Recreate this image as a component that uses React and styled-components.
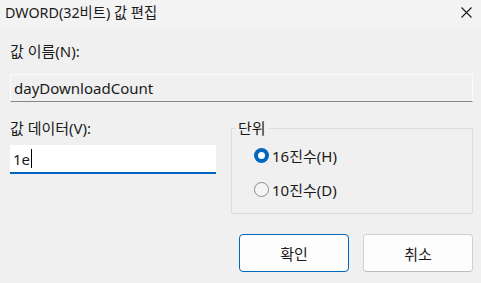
import React from "react";
import styled, { createGlobalStyle } from "styled-components";

const Global = createGlobalStyle`
  html, body { margin: 0; padding: 0; background: #f0f0f0; }
  * { box-sizing: border-box; }
`;

const FONT = `"Noto Sans", "Noto Sans CJK KR", sans-serif`;

const Window = styled.div`
  width: 481px;
  height: 283px;
  background: #f0f0f0;
  font-family: ${FONT};
  color: #1a1a1a;
  display: flex;
  flex-direction: column;
  overflow: hidden;
`;

const TitleBar = styled.div`
  height: 29px;
  background: #f3f3f3;
  display: flex;
  align-items: center;
  justify-content: space-between;
  padding: 0 8px 0 5px;
  font-size: 14.3px;
`;

const Title = styled.span`
  line-height: 1;
  margin-top: -3px;
`;

const Close = styled.svg`
  width: 11px;
  height: 11px;
  margin-right: 1px;
  margin-top: -4px;
`;

const Body = styled.div`
  padding: 14px 8px 0 10px;
  display: flex;
  flex-direction: column;
`;

const Label = styled.div`
  font-size: 15px;
  line-height: 16px;
  height: 16px;
`;

const NameField = styled.div`
  margin-top: 15px;
  height: 28px;
  background: #f0f0f0;
  border: 1px solid #fbfbfb;
  border-bottom: 1px solid #868686;
  display: flex;
  align-items: center;
  padding-left: 3px;
  font-size: 15px;
`;

const Row = styled.div`
  margin-top: 18px;
  display: grid;
  grid-template-columns: 206px 242px;
  justify-content: space-between;
  column-gap: 15px;
`;

const Column = styled.div`
  display: flex;
  flex-direction: column;
`;

const DataField = styled.div`
  margin-top: 9px;
  height: 29px;
  background: #ffffff;
  border-bottom: 2px solid #0067c0;
  display: flex;
  align-items: center;
  padding-left: 3px;
  font-size: 15px;
`;

const Caret = styled.span`
  display: inline-block;
  width: 1px;
  height: 19px;
  background: #000;
  margin-left: 1px;
`;

const Group = styled.fieldset`
  margin: 0;
  height: 94px;
  border: 1px solid #dcdcdc;
  padding: 8px 0 0 22px;
  display: flex;
  flex-direction: column;
  gap: 12px;
`;

const Legend = styled.legend`
  font-size: 15px;
  padding: 0 3px;
  margin-left: -19px;
  line-height: 16px;
`;

const RadioRow = styled.div`
  display: flex;
  align-items: center;
  font-size: 15px;
  height: 22px;
  gap: 3px;
`;

const RadioDot = styled.span`
  width: 15px;
  height: 15px;
  border-radius: 50%;
  display: inline-flex;
  align-items: center;
  justify-content: center;
  ${(p) =>
    p.$checked
      ? `background: #0067c0;`
      : `background: #f5f5f5; border: 1px solid #8a8a8a;`}
`;

const Inner = styled.span`
  display: block;
  width: 7px;
  height: 7px;
  border-radius: 50%;
  background: #fff;
`;

const Buttons = styled.div`
  margin-top: 20px;
  display: flex;
  justify-content: flex-end;
  gap: 14px;
`;

const Button = styled.button`
  width: 110px;
  height: 38px;
  border-radius: 4px;
  background: #fdfdfd;
  border: 1px solid ${(p) => (p.$primary ? "#0067c0" : "#d0d0d0")};
  border-bottom-color: ${(p) => (p.$primary ? "#0067c0" : "#bdbdbd")};
  font-family: ${FONT};
  font-size: 15px;
  color: #1a1a1a;
  padding: 0;
`;

export default function App() {
  return (
    <>
      <Global />
      <Window>
        <TitleBar>
          <Title>DWORD(32비트) 값 편집</Title>
          <Close viewBox="0 0 11 11">
            <path d="M0.5 0.5 L10.5 10.5 M10.5 0.5 L0.5 10.5" stroke="#1a1a1a" strokeWidth="1.1" fill="none" />
          </Close>
        </TitleBar>
        <Body>
          <Label>값 이름(N):</Label>
          <NameField>dayDownloadCount</NameField>
          <Row>
            <Column>
              <Label>값 데이터(V):</Label>
              <DataField>
                1e<Caret />
              </DataField>
            </Column>
            <Group>
              <Legend>단위</Legend>
              <RadioRow>
                <RadioDot $checked>
                  <Inner />
                </RadioDot>
                16진수(H)
              </RadioRow>
              <RadioRow>
                <RadioDot />
                10진수(D)
              </RadioRow>
            </Group>
          </Row>
          <Buttons>
            <Button $primary>확인</Button>
            <Button>취소</Button>
          </Buttons>
        </Body>
      </Window>
    </>
  );
}
